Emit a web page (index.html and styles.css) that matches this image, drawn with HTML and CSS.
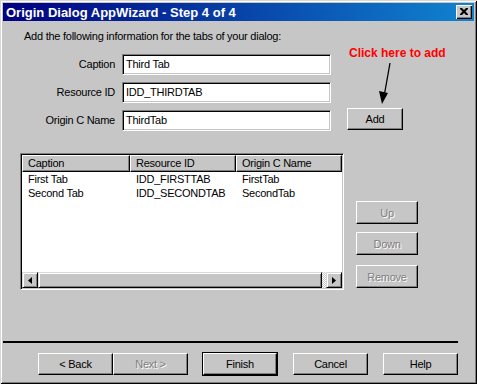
FILE: index.html
```html
<!DOCTYPE html>
<html>
<head>
<meta charset="utf-8">
<link rel="stylesheet" href="styles.css">
</head>
<body>
<div class="window">
  <div class="titlebar">
    <span class="title">Origin Dialog AppWizard - Step 4 of 4</span>
    <span class="close"><svg width="8" height="7" viewBox="0 0 8 7"><path d="M0 0h2l2 2l2-2h2v1l-2.5 2.5L8 6v1H6L4 5L2 7H0V6l2.5-2.5L0 1z" fill="#000"/></svg></span>
  </div>
  <div class="content">
    <p class="intro">Add the following information for the tabs of your dialog:</p>
    <div class="form">
      <label class="lbl">Caption</label>
      <div class="input">Third Tab</div>
      <span></span>
      <label class="lbl">Resource ID</label>
      <div class="input">IDD_THIRDTAB</div>
      <span></span>
      <label class="lbl">Origin C Name</label>
      <div class="input">ThirdTab</div>
      <div class="btn add">Add</div>
    </div>
    <div class="listrow">
      <div class="list">
        <div class="lhead">
          <div class="hcell c1">Caption</div>
          <div class="hcell c2">Resource ID</div>
          <div class="hcell c3">Origin C Name</div>
        </div>
        <div class="lrow"><span class="c1">First Tab</span><span class="c2">IDD_FIRSTTAB</span><span class="c3">FirstTab</span></div>
        <div class="lrow"><span class="c1">Second Tab</span><span class="c2">IDD_SECONDTAB</span><span class="c3">SecondTab</span></div>
        <div class="lfill"></div>
        <div class="hscroll">
          <div class="sbtn"><svg width="4" height="7" viewBox="0 0 4 7"><path d="M4 0v7L0 3.5z" fill="#000"/></svg></div>
          <div class="thumb"></div>
          <div class="dither"></div>
          <div class="sbtn"><svg width="4" height="7" viewBox="0 0 4 7"><path d="M0 0v7l4-3.5z" fill="#000"/></svg></div>
        </div>
      </div>
      <div class="side">
        <div class="btn side-btn disabled up">Up</div>
        <div class="btn side-btn disabled down">Down</div>
        <div class="btn side-btn disabled remove">Remove</div>
      </div>
    </div>
    <div class="sep"></div>
    <div class="footer">
      <div class="btn fbtn">&lt; Back</div>
      <div class="btn fbtn disabled">Next &gt;</div>
      <div class="btn fbtn default finish">Finish</div>
      <div class="btn fbtn cancel">Cancel</div>
      <div class="btn fbtn help">Help</div>
    </div>
  </div>
  <div class="note">Click here to add</div>
  <svg class="arrow" width="30" height="50" viewBox="0 0 30 50">
    <line x1="20" y1="5" x2="14.5" y2="36" stroke="#000" stroke-width="1.3"/>
    <path d="M9 33 L18 35 L12 46 Z" fill="#000"/>
  </svg>
</div>
</body>
</html>
```
FILE: styles.css
```css
* { box-sizing: border-box; }
html, body { margin: 0; padding: 0; background: #c6c6c6; }
body {
  font-family: "Liberation Sans", Arial, sans-serif;
  font-size: 11px;
  letter-spacing: -0.25px;
  color: #000;
}
.window {
  position: relative;
  width: 477px;
  height: 384px;
  background: #c6c6c6;
  padding: 3px;
  box-shadow: inset 1px 1px #d8d8d8, inset -1px -1px #000, inset 2px 2px #fff, inset -2px -2px #808080;
  overflow: hidden;
}
.titlebar {
  height: 18px;
  background: linear-gradient(to right, #000080, #1084d0);
  display: flex;
  align-items: center;
  justify-content: space-between;
  padding: 0 2px 0 3px;
}
.title {
  color: #fff;
  font-weight: bold;
  font-size: 13px;
  letter-spacing: 0;
}
.close {
  width: 16px;
  height: 14px;
  background: #c6c6c6;
  box-shadow: inset 1px 1px #fff, inset -1px -1px #000, inset -2px -2px #808080;
  display: flex;
  align-items: center;
  justify-content: center;
  padding-bottom: 1px;
}
.content { padding: 0; }
.intro {
  margin: 9px 0 0 21px;
  line-height: 13px;
}
.form {
  margin-top: 11px;
  margin-left: 17px;
  display: grid;
  grid-template-columns: 95px 209px 72px;
  column-gap: 7px;
  row-gap: 7px;
}
.form .add { margin-left: 9px; margin-top: -2px; height: 22px; width: 56px; }
.lbl {
  text-align: right;
  align-self: center;
  line-height: 13px;
}
.input {
  height: 21px;
  background: #fff;
  border: 1px solid;
  border-color: #808080 #fff #fff #808080;
  box-shadow: inset 1px 1px #000, inset -1px -1px #c6c6c6;
  padding: 0 3px;
  line-height: 19px;
}
.btn {
  display: flex;
  align-items: center;
  justify-content: center;
  background: #c6c6c6;
  border: 1px solid;
  border-color: #fff #000 #000 #fff;
  box-shadow: inset -1px -1px #808080;
}
.btn.disabled {
  color: #808080;
  text-shadow: 1px 1px #fff;
}
.listrow {
  margin-top: 22px;
  margin-left: 17px;
  display: flex;
  align-items: flex-start;
}
.list {
  width: 324px;
  height: 137px;
  background: #fff;
  border: 1px solid;
  border-color: #808080 #fff #fff #808080;
  box-shadow: inset 1px 1px #000, inset -1px -1px #c6c6c6;
  padding: 1px;
  display: flex;
  flex-direction: column;
}
.lhead { display: flex; height: 17px; }
.hcell {
  background: #c6c6c6;
  border: 1px solid;
  border-color: #fff #000 #000 #fff;
  box-shadow: inset -1px -1px #808080;
  padding-left: 5px;
  line-height: 14px;
}
.c1 { width: 108px; }
.c2 { width: 106px; }
.c3 { width: 106px; }
.lrow { display: flex; height: 14px; line-height: 14px; }
.lrow span { padding-left: 6px; }
.lfill { flex: 1; }
.hscroll { display: flex; height: 16px; }
.sbtn {
  width: 16px;
  height: 16px;
  background: #c6c6c6;
  border: 1px solid;
  border-color: #d8d8d8 #000 #000 #d8d8d8;
  box-shadow: inset 1px 1px #fff, inset -1px -1px #808080;
  display: flex;
  align-items: center;
  justify-content: center;
}
.thumb {
  flex: 1;
  background: #c6c6c6;
  border: 1px solid;
  border-color: #d8d8d8 #000 #000 #d8d8d8;
  box-shadow: inset 1px 1px #fff, inset -1px -1px #808080;
}
.dither {
  width: 4px;
  background: repeating-conic-gradient(#fff 0 25%, #c6c6c6 0 50%) 0 0 / 2px 2px;
}
.side {
  margin-left: 12px;
  display: flex;
  flex-direction: column;
}
.side-btn { width: 62px; height: 23px; }
.up { margin-top: 48px; }
.down { margin-top: 8px; }
.remove { margin-top: 10px; }
.sep {
  margin-top: 51px;
  width: 455px;
  height: 2px;
  background: #000;
}
.footer {
  margin-top: 10px;
  margin-left: 35px;
  display: flex;
}
.fbtn { width: 75px; height: 22px; }
.finish {
  margin-left: 15px;
  width: 74px;
  outline: 1px solid #000;
  border-color: #fff #000 #000 #fff;
}
.cancel { margin-left: 16px; }
.help { margin-left: 15px; }
.note {
  position: absolute;
  left: 349px;
  top: 46px;
  color: #ff0000;
  font-weight: bold;
  font-size: 12px;
  line-height: 14px;
  letter-spacing: 0;
}
.arrow {
  position: absolute;
  left: 370px;
  top: 58px;
}
```
